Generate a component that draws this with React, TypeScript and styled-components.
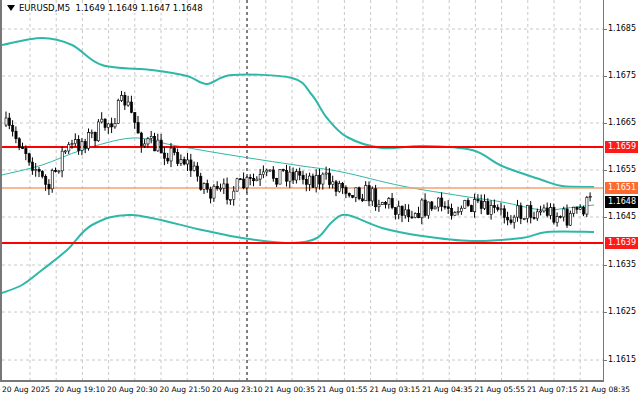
import React from 'react';
import styled, { createGlobalStyle } from 'styled-components';

const Global = createGlobalStyle`
  html, body { margin: 0; padding: 0; background: #fff; }
`;

const PLOT_W = 604;
const PLOT_H = 382;

const priceTicks = [
  { t: '1.1685', y: 29 }, { t: '1.1675', y: 76 }, { t: '1.1665', y: 123 },
  { t: '1.1655', y: 170 }, { t: '1.1645', y: 217 }, { t: '1.1635', y: 265 },
  { t: '1.1625', y: 312 }, { t: '1.1615', y: 360 },
];

const timeLabels = ['20 Aug 2025', '20 Aug 19:10', '20 Aug 20:30', '20 Aug 21:50', '20 Aug 23:10', '21 Aug 00:35',
  '21 Aug 01:55', '21 Aug 03:15', '21 Aug 04:35', '21 Aug 05:55', '21 Aug 07:15', '21 Aug 08:35'];

const upper = [[0, 45], [40, 38], [70, 45], [100, 65], [150, 70], [185, 76], [205, 84], [230, 75], [290, 78], [310, 95], [325, 118], [345, 137], [380, 148], [420, 146], [470, 150], [500, 166], [540, 180], [560, 186], [592, 187]];
const middle = [[0, 175], [40, 165], [80, 150], [130, 138], [170, 145], [210, 152], [260, 160], [300, 166], [340, 172], [400, 186], [460, 196], [500, 202], [540, 210], [565, 208], [592, 205]];
const lower = [[0, 293], [20, 285], [40, 270], [65, 250], [90, 225], [130, 215], [200, 230], [240, 238], [290, 243], [315, 238], [330, 222], [345, 215], [380, 228], [420, 236], [470, 241], [520, 238], [545, 232], [592, 232]];
const path = [[0, 125], [20, 145], [45, 190], [60, 152], [90, 135], [110, 118], [122, 100], [140, 142], [180, 158], [210, 196], [240, 186], [280, 172], [320, 180], [360, 192], [400, 210], [450, 206], [500, 214], [540, 210], [565, 218], [588, 202]];

const interp = (pts: number[][], x: number) => {
  for (let i = 1; i < pts.length; i++) {
    if (x <= pts[i][0]) {
      const [x0, y0] = pts[i - 1]; const [x1, y1] = pts[i];
      return y0 + (y1 - y0) * (x - x0) / (x1 - x0);
    }
  }
  return pts[pts.length - 1][1];
};

// catmull-rom to cubic bezier so the bands come out smooth
const smooth = (pts: number[][]) => {
  let d = `M${pts[0][0]},${pts[0][1]}`;
  for (let i = 0; i < pts.length - 1; i++) {
    const p0 = pts[i - 1] || pts[i]; const p1 = pts[i]; const p2 = pts[i + 1]; const p3 = pts[i + 2] || p2;
    const c1 = [p1[0] + (p2[0] - p0[0]) / 6, p1[1] + (p2[1] - p0[1]) / 6];
    const c2 = [p2[0] - (p3[0] - p1[0]) / 6, p2[1] - (p3[1] - p1[1]) / 6];
    d += ` C${c1[0]},${c1[1]} ${c2[0]},${c2[1]} ${p2[0]},${p2[1]}`;
  }
  return d;
};

let seed = 7;
const rnd = () => { seed = (seed * 16807) % 2147483647; return seed / 2147483647; };

const candles = (() => {
  const out: { x: number; o: number; c: number; h: number; l: number }[] = [];
  let prev = interp(path, 0);
  for (let x = 3; x < 588; x += 3.3) {
    const target = interp(path, x) + (rnd() - 0.5) * 20;
    const o = prev; const c = target;
    const h = Math.min(o, c) - rnd() * 7; const l = Math.max(o, c) + rnd() * 7;
    out.push({ x, o, c, h, l });
    prev = c;
  }
  return out;
})();

export default function App() {
  return (
    <Frame>
      <Global />
      <Plot>
        <svg width={PLOT_W} height={PLOT_H}>
          {priceTicks.map(p => (
            <line key={p.t} x1={0} x2={PLOT_W} y1={p.y} y2={p.y} stroke="#c8c8c8" strokeDasharray="3,3" />
          ))}
          {Array.from({ length: 23 }).map((_, i) => (
            <line key={i} x1={28 + i * 26.2} x2={28 + i * 26.2} y1={0} y2={PLOT_H} stroke="#c8c8c8" strokeDasharray="3,3" />
          ))}
          <line x1={245} x2={245} y1={0} y2={PLOT_H} stroke="#000" strokeDasharray="3,3" />
          <path d={smooth(upper)} fill="none" stroke="#2fb8a8" strokeWidth={2} />
          <path d={smooth(lower)} fill="none" stroke="#2fb8a8" strokeWidth={2} />
          <path d={smooth(middle)} fill="none" stroke="#2fb8a8" strokeWidth={1} />
          <line x1={0} x2={PLOT_W} y1={188} y2={188} stroke="#f5a070" strokeWidth={1.5} />
          <line x1={0} x2={PLOT_W} y1={147} y2={147} stroke="#ff0000" strokeWidth={2} />
          <line x1={0} x2={PLOT_W} y1={243} y2={243} stroke="#ff0000" strokeWidth={2} />
          {candles.map((k, i) => (
            <g key={i}>
              <line x1={k.x + 1} x2={k.x + 1} y1={k.h} y2={k.l} stroke="#000" />
              <rect x={k.x} y={Math.min(k.o, k.c)} width={2.2} height={Math.max(1, Math.abs(k.o - k.c))}
                fill={k.c < k.o ? '#fff' : '#000'} stroke="#000" strokeWidth={0.6} />
            </g>
          ))}
        </svg>
        <Title>
          <svg width="8" height="6"><polygon points="0,0 8,0 4,6" fill="#000" /></svg>
          EURUSD,M5&nbsp;&nbsp;1.1649 1.1649 1.1647 1.1648
        </Title>
      </Plot>
      <Axis>
        {priceTicks.map(p => (
          <Tick key={p.t} style={{ top: p.y - 6 }}>{p.t}</Tick>
        ))}
        <Tag $bg="#ff1a1a" style={{ top: 141 }}>1.1659</Tag>
        <Tag $bg="#ff6a30" style={{ top: 182 }}>1.1651</Tag>
        <Tag $bg="#000" style={{ top: 196 }}>1.1648</Tag>
        <Tag $bg="#ff1a1a" style={{ top: 237 }}>1.1639</Tag>
      </Axis>
      <TimeAxis>
        {timeLabels.map(t => <TimeLabel key={t}>{t}</TimeLabel>)}
      </TimeAxis>
    </Frame>
  );
}

const Frame = styled.div`
  width: 640px;
  height: 401px;
  display: grid;
  grid-template-columns: 604px 36px;
  grid-template-rows: 382px 19px;
  background: #fff;
  font-family: "DejaVu Sans", sans-serif;
  font-size: 8px;
  color: #000;
  overflow: hidden;
`;

const Plot = styled.div`
  position: relative;
  border-left: 2px solid #777;
  border-bottom: 2px solid #777;
  border-right: 1px solid #777;
  box-sizing: border-box;
  overflow: hidden;
  svg { display: block; }
`;

const Title = styled.div`
  position: absolute;
  top: 3px;
  left: 5px;
  display: flex;
  align-items: center;
  gap: 4px;
  font-size: 8.5px;
  background: #fff;
`;

const Axis = styled.div`
  position: relative;
`;

const Tick = styled.div`
  position: absolute;
  left: 4px;
  line-height: 12px;
  &::before {
    content: '';
    position: absolute;
    left: -4px;
    top: 6px;
    width: 3px;
    border-top: 1px solid #777;
  }
`;

const Tag = styled.div<{ $bg: string }>`
  position: absolute;
  left: 1px;
  width: 33px;
  height: 12px;
  line-height: 12px;
  padding-left: 3px;
  box-sizing: border-box;
  background: ${p => p.$bg};
  color: #fff;
`;

const TimeAxis = styled.div`
  grid-column: 1 / 3;
  display: flex;
  padding-left: 2px;
  padding-top: 3px;
`;

const TimeLabel = styled.div`
  width: 52.5px;
  flex-shrink: 0;
  white-space: nowrap;
  font-size: 7.5px;
`;
